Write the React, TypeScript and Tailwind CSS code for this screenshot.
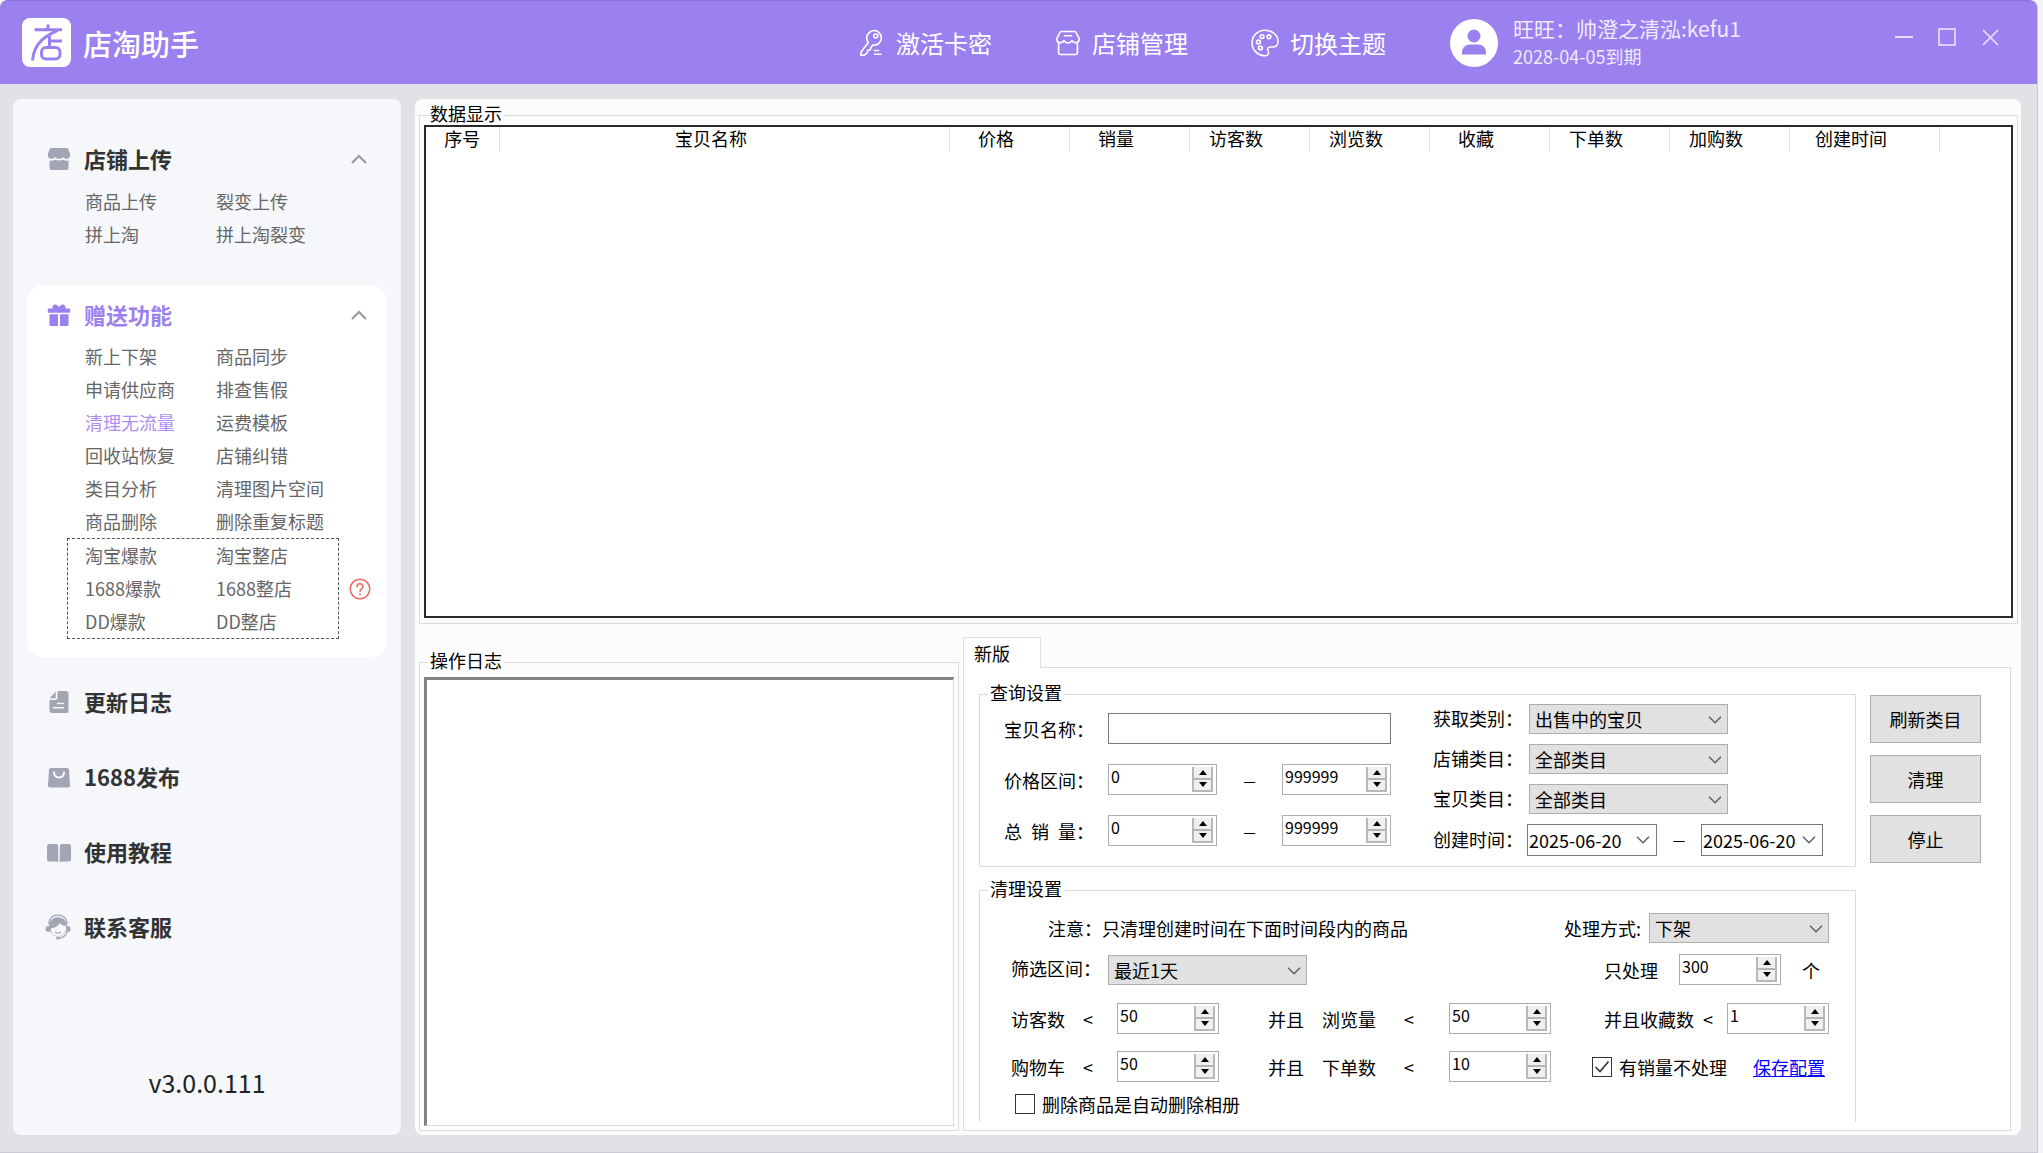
import { useState } from "react";
import type { ReactNode } from "react";

const columns = [
  { title: "序号", width: "w-[73px]", pad: "" },
  { title: "宝贝名称", width: "w-[450px]", pad: "pr-[26px]" },
  { title: "价格", width: "w-[120px]", pad: "pr-[26px]" },
  { title: "销量", width: "w-[120px]", pad: "pr-[26px]" },
  { title: "访客数", width: "w-[120px]", pad: "pr-[26px]" },
  { title: "浏览数", width: "w-[120px]", pad: "pr-[26px]" },
  { title: "收藏", width: "w-[120px]", pad: "pr-[26px]" },
  { title: "下单数", width: "w-[120px]", pad: "pr-[26px]" },
  { title: "加购数", width: "w-[120px]", pad: "pr-[26px]" },
  { title: "创建时间", width: "w-[150px]", pad: "pr-[26px]" },
];

const uploadLinks = ["商品上传", "裂变上传", "拼上淘", "拼上淘裂变"];

const giftLinks = [
  "新上下架", "商品同步",
  "申请供应商", "排查售假",
  "清理无流量", "运费模板",
  "回收站恢复", "店铺纠错",
  "类目分析", "清理图片空间",
  "商品删除", "删除重复标题",
];

const hotLinks = ["淘宝爆款", "淘宝整店", "1688爆款", "1688整店", "DD爆款", "DD整店"];

/* ---------- icons ---------- */

const LogoIcon = () => (
  <svg viewBox="0 0 49 49" className="size-[49px]" fill="none" stroke="#9b80f0" strokeWidth="3">
    <rect width="49" height="49" rx="8" fill="#fff" stroke="none" />
    <path d="M26 6.500v5M12.500 11.800H40" />
    <path d="M35.500 12.500C29 15.500 12 22 10.500 42.500" />
    <path d="M27.500 17.500v12M27.500 23H40" />
    <rect x="19.500" y="29.500" width="18.500" height="11.500" rx="4.500" />
  </svg>
);

const KeyIcon = () => (
  <svg viewBox="0 0 26 28" className="h-7 w-[26px]" fill="none" stroke="#fff" strokeWidth="1.600" strokeLinecap="round" strokeLinejoin="round">
    <path d="M9.300 13.400a7.300 7.300 0 1 1 4.600 2.700l-2 2.300-.6 2.300-2.400.4-.6 2.600-2.500 2.200-4 .3.200-3.200z" />
    <circle cx="16.800" cy="7" r="2" />
    <path d="M15.500 21.500h4M15.500 25.300h6.500" />
  </svg>
);

const ShopIcon = () => (
  <svg viewBox="0 0 26 26" className="size-[26px]" fill="none" stroke="#fff" strokeWidth="1.600" strokeLinecap="round" strokeLinejoin="round">
    <path d="M5.500 1.500h15l3.800 7.200c0 4.600-5.400 5.300-7.400 1.800-1.600 3.300-6.200 3.300-7.800 0-2 3.500-7.400 2.800-7.400-1.800z" />
    <path d="M3.600 13v9.500a2 2 0 0 0 2 2h14.800a2 2 0 0 0 2-2V13M9.500 5.800h7" />
  </svg>
);

const PaletteIcon = () => (
  <svg viewBox="0 0 28 28" className="size-7" fill="none" stroke="#fff" strokeWidth="1.600">
    <path d="M14 1.200c7.200 0 13 5 13 11.300 0 4-2.600 5.500-5.600 5.500h-2.200c-2.400 0-3 1.800-2.200 3.500 1 2.200 1 5.300-2.600 5.300C7.200 26.800 1 21.200 1 14S6.800 1.200 14 1.200z" />
    <circle cx="11" cy="7.600" r="1.900" />
    <circle cx="18" cy="7.800" r="1.900" />
    <circle cx="7.400" cy="13" r="1.900" />
    <circle cx="9.400" cy="19" r="1.900" />
  </svg>
);

const StoreSolid = () => (
  <svg viewBox="0 0 24 24" className="size-6" fill="#a3a5b5">
    <path d="M4.500 1h15q1.200 0 1.700 1.100L23 6.500c.8 3-1 5.300-3.300 5.300-1.800 0-2.700-.8-3.800-1.600-1.200 1-2.400 1.600-3.900 1.600s-2.700-.6-3.900-1.600C7 11 6 11.800 4.300 11.800 2 11.800.2 9.500 1 6.500l1.800-4.400Q3.300 1 4.500 1z" />
    <path d="M2.500 13.500c2.100.4 3.700.1 5.500-1 2.500 1.400 5.500 1.400 8 0 1.800 1.100 3.400 1.400 5.500 1V21q0 2-2 2h-15q-2 0-2-2z" />
  </svg>
);

const GiftSolid = () => (
  <svg viewBox="0 0 24 24" className="size-6" fill="#9b80f0">
    <path d="M1.500 5.500h4C4.800 3 7 .8 9.300 1.800L12 3.700l2.700-1.900C17 .8 19.200 3 18.500 5.500h4q.7 0 .7.700V9q0 .8-.7.800h-21q-.7 0-.7-.8V6.200q0-.7.700-.7z" />
    <path d="M2.500 11.200H11V23H4q-1.500 0-1.500-1.500zM13 11.200h8.500v10.300Q21.500 23 20 23h-7z" />
  </svg>
);

const DocSolid = () => (
  <svg viewBox="0 0 24 24" className="size-6" fill="#a3a5b5">
    <path d="M10.500 1H19q2.500 0 2.500 2.500v17Q21.500 23 19 23H5q-2.500 0-2.500-2.500V10h5.500q2.500 0 2.500-2.500z" />
    <path d="M8.700 1.500v6q0 .7-.7.700H2.700z" />
    <path d="M10.500 13.500h6M6.500 17.800h10" stroke="#f5f7fb" strokeWidth="1.500" strokeLinecap="round" />
  </svg>
);

const BagSolid = () => (
  <svg viewBox="0 0 24 24" className="size-6" fill="#a3a5b5">
    <path d="M4 3h16q1.800 0 2 1.800l1 15.500q.1 2.200-2 2.200H3q-2.100 0-2-2.200l1-15.500Q2.200 3 4 3z" />
    <path d="M7 7.500c0 6.500 10 6.500 10 0" fill="none" stroke="#fff" strokeWidth="2" strokeLinecap="round" />
  </svg>
);

const BookSolid = () => (
  <svg viewBox="0 0 24 24" className="size-6" fill="#a3a5b5">
    <path d="M2 4h7q2.200 0 2.200 2v16.500q-1-1-2.700-1H2q-2 0-2-2V6q0-2 2-2zM22 4h-7q-2.200 0-2.200 2v16.500q1-1 2.700-1H22q2 0 2-2V6q0-2-2-2z" />
  </svg>
);

const ServiceSolid = () => (
  <svg viewBox="0 0 26 26" className="-ml-[2px] size-[26px]">
    <path d="M3.500 10C4.500 4.500 8 1.200 13 1.200S21.500 4.500 22.500 10M22.500 17c-1.500 4.500-4.500 7-8.500 7.300" fill="none" stroke="#a3a5b5" strokeWidth="1.200" />
    <path d="M13 3.200c5.500 0 9 4 9 9h1.500q2 0 2 2v1q0 2.500-2.500 2.500h-2c.4-2 .3-4-.5-6-2.500 0-4.300-1-5.500-2.700-2 3-5 5-9 5.300v3.400H3Q.5 17.700.5 15.200v-1q0-2 2-2H4c0-5 3.500-9 9-9z" fill="#a3a5b5" />
    <path d="M5.500 16c.8 3.800 3.800 6.500 7.500 6.500s6.500-2.700 7.300-6" fill="none" stroke="#c9cad6" strokeWidth="1" />
    <path d="M10 18q3 2.500 6 0" fill="none" stroke="#a3a5b5" strokeWidth="1.200" />
    <ellipse cx="13" cy="24.300" rx="2" ry="1.200" fill="#a3a5b5" />
  </svg>
);

const ChevronUp = () => (
  <svg viewBox="0 0 16 10" className="h-[10px] w-4" fill="none" stroke="#9a9a9e" strokeWidth="2.200">
    <path d="M1 9l7-7 7 7" />
  </svg>
);

const ChevronDown = () => (
  <svg viewBox="0 0 14 8" className="h-2 w-[14px]" fill="none" stroke="#606060" strokeWidth="1.500">
    <path d="M1 .8l6 6 6-6" />
  </svg>
);

/* ---------- form parts ---------- */

function Spin({ id, value, width = "w-[102px]" }: { id: string; value: number; width?: string }) {
  const [num, setNum] = useState(value);
  return (
    <div className={`flex h-[31px] shrink-0 border border-[#abadb3] bg-white ${width}`}>
      <input
        id={id}
        value={num}
        inputMode="numeric"
        onChange={(e) => setNum(Number(e.target.value) || 0)}
        className="h-[22px] w-0 flex-1 pl-[2px] text-[16px] leading-[22px] outline-none"
      />
      <div className="mt-[2px] mr-[3px] flex h-[25px] w-[21px] flex-col border-x-2 border-b-2 border-[#b8b8b8] bg-[#f0f0f0]">
        <button aria-label="增加" onClick={() => setNum(num + 1)} className="flex flex-1 items-center justify-center border-b-2 border-[#b4b4b4]">
          <svg viewBox="0 0 8 5" className="h-[5px] w-2"><path d="M0 5l4-5 4 5z" /></svg>
        </button>
        <button aria-label="减少" onClick={() => setNum(Math.max(0, num - 1))} className="flex flex-1 items-center justify-center">
          <svg viewBox="0 0 8 5" className="h-[5px] w-2"><path d="M0 0l4 5 4-5z" /></svg>
        </button>
      </div>
    </div>
  );
}

function Select({ id, options, width }: { id: string; options: string[]; width: string }) {
  return (
    <div className={`relative h-[30px] shrink-0 ${width}`}>
      <select id={id} className="h-full w-full appearance-none border border-[#adadad] bg-[#e1e1e1] pl-[5px] text-[18px] leading-[26px] outline-none">
        {options.map((o) => (
          <option key={o}>{o}</option>
        ))}
      </select>
      <span className="pointer-events-none absolute top-[12px] right-[6px]"><ChevronDown /></span>
    </div>
  );
}

function DateBox({ id, label, width }: { id: string; label: string; width: string }) {
  return (
    <div className={`flex h-8 shrink-0 items-center border border-[#7a7a7a] bg-white ${width}`}>
      <input id={id} aria-label={label} defaultValue="2025-06-20" className="h-[26px] w-0 flex-1 pl-[1px] text-[18px] leading-6 outline-none" />
      <button aria-label="选择日期" className="mr-[6px]"><ChevronDown /></button>
    </div>
  );
}

function Check({ id, checked = false, children }: { id: string; checked?: boolean; children: ReactNode }) {
  return (
    <span className="flex items-center gap-[7px]">
      <span className="relative flex size-5">
        <input id={id} type="checkbox" defaultChecked={checked} className="peer size-5 appearance-none border border-[#333] bg-white" />
        <svg viewBox="0 0 20 20" className="pointer-events-none absolute inset-0 hidden size-5 peer-checked:block" fill="none" stroke="#333" strokeWidth="1.600">
          <path d="M3.500 10l4.500 4.500 8.500-10" />
        </svg>
      </span>
      <label htmlFor={id}>{children}</label>
    </span>
  );
}

const Group = ({ title, className = "", children }: { title: string; className?: string; children: ReactNode }) => (
  <fieldset className={`min-w-0 border border-[#dcdcdc] ${className}`}>
    <legend className="ml-[8px] h-5 px-[2px] leading-4">{title}</legend>
    {children}
  </fieldset>
);

const Dash = ({ htmlFor }: { htmlFor: string }) => (
  <label htmlFor={htmlFor} className="w-[65px] text-center text-[14px]">—</label>
);

/* ---------- sidebar ---------- */

const MenuTitle = ({ icon, title, open, active }: { icon: ReactNode; title: string; open?: boolean; active?: boolean }) => (
  <button className="flex h-[30px] w-full items-center pr-5 pl-5">
    <span className="flex w-[37px] items-center">{icon}</span>
    <span className={`pb-[3px] text-[22px] leading-[30px] font-bold ${active ? "text-[#9b80f0]" : "text-[#333]"}`}>{title}</span>
    {open && <span className="ml-auto"><ChevronUp /></span>}
  </button>
);

const LinkGrid = ({ items, className }: { items: string[]; className: string }) => (
  <div className={`grid grid-cols-[131px_1fr] text-[18px] leading-[33px] text-[#666] ${className}`}>
    {items.map((t) => (
      <a key={t} href="#" className={t === "清理无流量" ? "text-[#ab8df5]" : ""}>{t}</a>
    ))}
  </div>
);

function Sidebar() {
  return (
    <aside className="flex w-[388px] shrink-0 flex-col rounded-lg bg-[#f5f7fb] px-[14px] pt-[45px] pb-[38px]">
      <section className="pb-[34px]">
        <MenuTitle icon={<StoreSolid />} title="店铺上传" open />
        <LinkGrid items={uploadLinks} className="mt-[11px] ml-[58px]" />
      </section>
      <section className="rounded-2xl bg-white pt-[15px] pb-[18px]">
        <MenuTitle icon={<GiftSolid />} title="赠送功能" open active />
        <LinkGrid items={giftLinks} className="mt-[10px] ml-[58px]" />
        <div className="flex items-center gap-[10px] pl-10">
          <LinkGrid items={hotLinks} className="w-[272px] border border-dashed border-[#555] pl-[17px]" />
          <button aria-label="帮助">
            <svg viewBox="0 0 22 22" className="size-[22px]" fill="none" stroke="#f0645f" strokeWidth="1.500">
              <circle cx="11" cy="11" r="9.800" />
              <path d="M8 8.700c0-4 6-4 6-.3 0 2.300-3 2.500-3 5" strokeLinecap="round" />
              <path d="M11 15.500v1.800" />
            </svg>
          </button>
        </div>
      </section>
      <nav className="flex flex-col gap-[45px] pt-[30px]">
        <MenuTitle icon={<DocSolid />} title="更新日志" />
        <MenuTitle icon={<BagSolid />} title="1688发布" />
        <MenuTitle icon={<BookSolid />} title="使用教程" />
        <MenuTitle icon={<ServiceSolid />} title="联系客服" />
      </nav>
      <p className="mt-auto text-center text-[25px] leading-[30px] text-[#222]">v3.0.0.111</p>
    </aside>
  );
}

/* ---------- settings ---------- */

function QuerySettings() {
  return (
    <Group title="查询设置">
      <div className="flex justify-between pr-8 pb-[10px] pl-6">
        <div className="mt-[9px] flex flex-col gap-5">
          <div className="flex items-center">
            <label htmlFor="name" className="w-[104px]">宝贝名称：</label>
            <input id="name" className="h-[31px] w-[283px] border border-[#7a7a7a] px-1 outline-none" />
          </div>
          <div className="flex items-center">
            <label htmlFor="price-min" className="w-[104px]">价格区间：</label>
            <Spin id="price-min" value={0} width="w-[109px]" />
            <Dash htmlFor="price-max" />
            <Spin id="price-max" value={999999} width="w-[109px]" />
          </div>
          <div className="flex items-center">
            <label htmlFor="sale-min" className="w-[104px]">总&ensp;销&ensp;量：</label>
            <Spin id="sale-min" value={0} width="w-[109px]" />
            <Dash htmlFor="sale-max" />
            <Spin id="sale-max" value={999999} width="w-[109px]" />
          </div>
        </div>
        <div className="flex flex-col gap-[10px]">
          <div className="flex items-center">
            <label htmlFor="kind" className="w-24 pb-[3px]">获取类别：</label>
            <Select id="kind" options={["出售中的宝贝", "仓库中的宝贝"]} width="w-[199px]" />
          </div>
          <div className="flex items-center">
            <label htmlFor="shop-cat" className="w-24 pb-[3px]">店铺类目：</label>
            <Select id="shop-cat" options={["全部类目"]} width="w-[199px]" />
          </div>
          <div className="flex items-center">
            <label htmlFor="item-cat" className="w-24 pb-[3px]">宝贝类目：</label>
            <Select id="item-cat" options={["全部类目"]} width="w-[199px]" />
          </div>
          <div className="flex items-center">
            <label htmlFor="date-from" className="w-[94px] pb-[3px]">创建时间：</label>
            <DateBox id="date-from" label="开始日期" width="w-[130px]" />
            <span className="w-11 pb-[3px] text-center text-[14px]">—</span>
            <DateBox id="date-to" label="结束日期" width="w-[122px]" />
          </div>
        </div>
      </div>
    </Group>
  );
}

function CleanSettings() {
  return (
    <Group title="清理设置" className="mt-[13px] border-b-0">
      <div className="pt-[13px] pr-[26px] pb-[6px] pl-[31px]">
        <div className="flex h-[30px] items-center">
          <p className="pl-[37px]">注意：只清理创建时间在下面时间段内的商品</p>
          <label htmlFor="action" className="mr-2 ml-auto">处理方式:</label>
          <Select id="action" options={["下架", "删除"]} width="w-[180px]" />
        </div>
        <div className="mt-[11px] flex h-[31px] items-center">
          <label htmlFor="range" className="w-[97px] pb-[3px]">筛选区间：</label>
          <Select id="range" options={["最近1天", "最近7天", "最近30天"]} width="w-[199px]" />
          <div className="ml-auto flex w-[225px] items-center">
            <label htmlFor="limit" className="w-[75px]">只处理</label>
            <Spin id="limit" value={300} />
            <span className="ml-[21px]">个</span>
          </div>
        </div>
        <div className="mt-[18px] flex items-center">
          <label htmlFor="visitors" className="w-[72px]">访客数</label>
          <span className="w-[34px]">&lt;</span>
          <Spin id="visitors" value={50} />
          <span className="ml-[49px] w-[54px]">并且</span>
          <label htmlFor="views" className="w-[82px]">浏览量</label>
          <span className="w-[45px]">&lt;</span>
          <Spin id="views" value={50} />
          <div className="ml-auto flex w-[225px] items-center">
            <label htmlFor="favs" className="w-[99px]">并且收藏数</label>
            <span className="w-6">&lt;</span>
            <Spin id="favs" value={1} />
          </div>
        </div>
        <div className="mt-[17px] flex items-center">
          <label htmlFor="carts" className="w-[72px]">购物车</label>
          <span className="w-[34px]">&lt;</span>
          <Spin id="carts" value={50} />
          <span className="ml-[49px] w-[54px]">并且</span>
          <label htmlFor="orders" className="w-[82px]">下单数</label>
          <span className="w-[45px]">&lt;</span>
          <Spin id="orders" value={10} />
          <div className="ml-auto flex w-[237px] items-center justify-between pr-1">
            <Check id="skip-sold" checked>有销量不处理</Check>
            <a href="#" className="text-[#0000ff] underline">保存配置</a>
          </div>
        </div>
        <div className="mt-[10px] flex h-6 items-center pl-1">
          <Check id="del-album">删除商品是自动删除相册</Check>
        </div>
      </div>
    </Group>
  );
}

const ActionButton = ({ children }: { children: ReactNode }) => (
  <button className="h-12 w-[111px] border border-[#adadad] bg-[#e1e1e1]">{children}</button>
);

const TopButton = ({ icon, children }: { icon: ReactNode; children: ReactNode }) => (
  <button className="flex items-center gap-[11px] text-[24px] leading-8">
    {icon}
    {children}
  </button>
);

export default function App() {
  return (
    <div className="min-h-screen bg-[#f4f4f6] pr-[5px] font-['Noto_Sans_CJK_SC',sans-serif] text-[18px] leading-6 whitespace-nowrap text-black">
      <div className="flex min-h-screen flex-col rounded-t-lg border-r border-b border-[#c9cad4] bg-[#e1e1e6]">
        <header className="flex h-[84px] items-center rounded-t-lg border-t border-[#8a72d6] bg-[#9b80f0] pl-[22px] text-white">
          <LogoIcon />
          <h1 className="ml-3 text-[29px] leading-9 font-medium">店淘助手</h1>
          <div className="ml-auto flex items-center gap-[63px]">
            <TopButton icon={<KeyIcon />}>激活卡密</TopButton>
            <TopButton icon={<ShopIcon />}>店铺管理</TopButton>
            <TopButton icon={<PaletteIcon />}>切换主题</TopButton>
          </div>
          <div className="ml-16 flex w-[410px] items-center gap-[15px]">
            <svg viewBox="0 0 48 48" className="size-12">
              <circle cx="24" cy="24" r="24" fill="#fff" />
              <circle cx="24" cy="17" r="6.500" fill="#9b80f0" />
              <path d="M12 35.500v-2c0-5 3.500-8 8-8h8c4.500 0 8 3 8 8v2z" fill="#9b80f0" />
            </svg>
            <div className="pb-1 text-[#efeaff]">
              <p className="text-[21px] leading-[30px]">旺旺：帅澄之清泓:kefu1</p>
              <p className="text-[18px] leading-[26px]">2028-04-05到期</p>
            </div>
          </div>
          <div className="mr-[38px] mb-3 ml-[35px] flex items-center gap-[25px]">
            <button aria-label="最小化">
              <svg viewBox="0 0 18 18" className="size-[18px]" stroke="#e9e2ff" strokeWidth="2"><path d="M0 9h18" /></svg>
            </button>
            <button aria-label="最大化">
              <svg viewBox="0 0 18 18" className="size-[18px]" fill="none" stroke="#e9e2ff" strokeWidth="1.600"><rect x="1" y="1" width="16" height="16" /></svg>
            </button>
            <button aria-label="关闭">
              <svg viewBox="0 0 18 18" className="size-[18px]" stroke="#e9e2ff" strokeWidth="1.600"><path d="M2 2l15 15M17 2l-15 15" /></svg>
            </button>
          </div>
        </header>

        <div className="flex flex-1 gap-[14px] pt-[15px] pr-4 pb-[17px] pl-[13px]">
          <Sidebar />

          <main className="flex min-w-0 flex-1 flex-col rounded-lg bg-[#fcfcfc] pt-[6px] pr-[3px] pb-1 pl-1">
            <Group title="数据显示" className="flex flex-1 flex-col pb-[5px]">
              <div className="mx-1 flex-1 border-2 border-[#2a2a2a] bg-white">
                <table className="w-full table-fixed">
                  <thead>
                    <tr>
                      {columns.map((c) => (
                        <th key={c.title} className={`h-[25px] border-r border-[#e2e2e2] p-0 text-center align-top leading-[22px] font-normal ${c.width} ${c.pad}`}>
                          {c.title}
                        </th>
                      ))}
                      <th className="p-0" />
                    </tr>
                  </thead>
                </table>
              </div>
            </Group>

            <div className="mt-[13px] flex gap-1 pr-[7px]">
              <Group title="操作日志" className="mt-[15px] flex w-[540px] shrink-0 flex-col pb-1">
                <textarea
                  aria-label="操作日志"
                  readOnly
                  className="mx-1 mt-[5px] flex-1 resize-none border-t-[3px] border-r border-b border-l-[3px] border-t-[#828282] border-r-[#dcdcdc] border-b-[#dcdcdc] border-l-[#828282] bg-white outline-none"
                />
              </Group>

              <div className="flex min-w-0 flex-1 flex-col">
                <button className="relative -mb-px h-[31px] w-[78px] border border-b-0 border-[#dcdcdc] bg-white pl-[10px] text-left">新版</button>
                <div className="flex border border-[#dcdcdc] bg-white pt-4 pr-[29px] pb-2 pl-[15px]">
                  <div className="min-w-0 flex-1">
                    <QuerySettings />
                    <CleanSettings />
                  </div>
                  <div className="mt-[11px] ml-[14px] flex flex-col gap-3">
                    <ActionButton>刷新类目</ActionButton>
                    <ActionButton>清理</ActionButton>
                    <ActionButton>停止</ActionButton>
                  </div>
                </div>
              </div>
            </div>
          </main>
        </div>
      </div>
    </div>
  );
}
